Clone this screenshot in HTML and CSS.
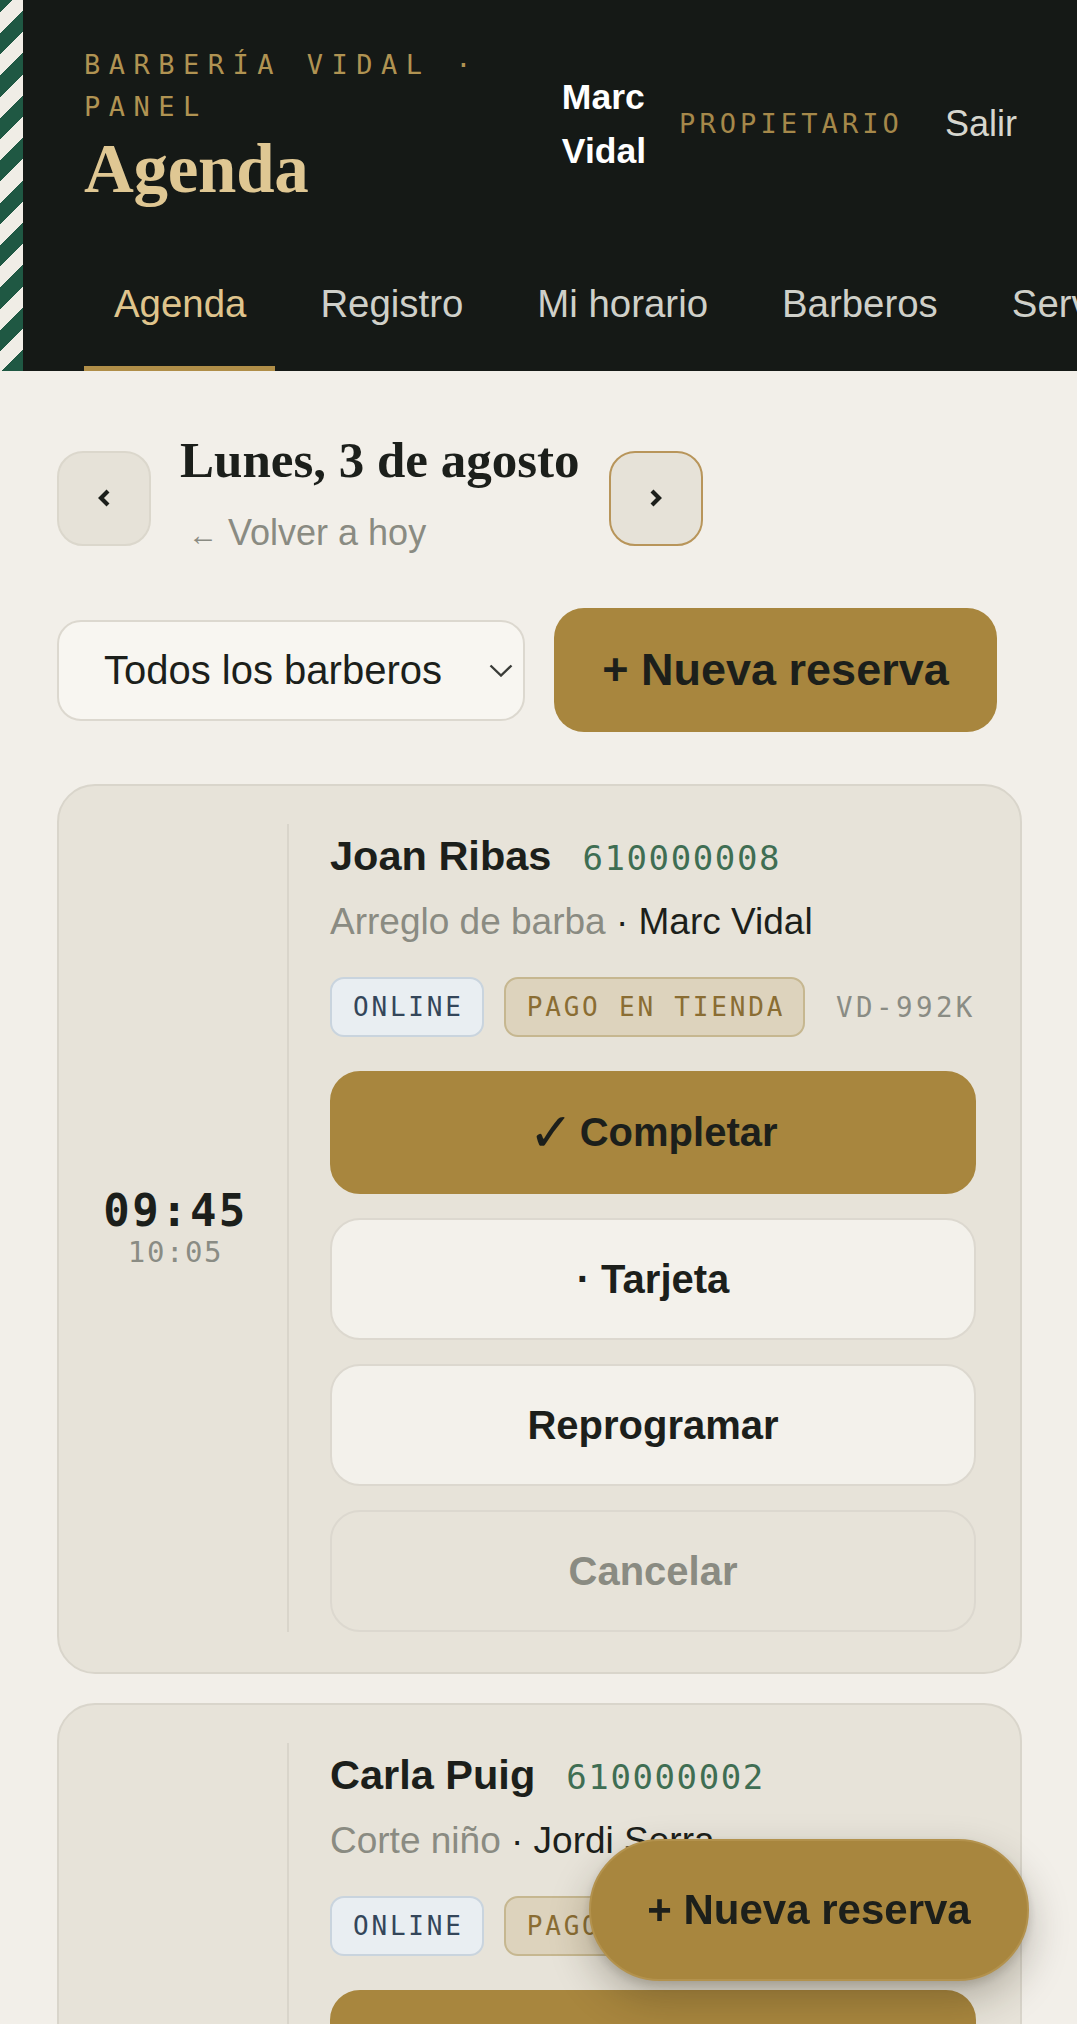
FILE: index.html
```html
<!DOCTYPE html>
<html lang="es">
<head>
<meta charset="utf-8">
<title>Agenda · Barbería Vidal</title>
<link rel="stylesheet" href="styles.css">
</head>
<body>
<header class="topbar">
  <div class="stripe"></div>
  <div class="topbar-inner">
    <div class="topbar-row">
      <div class="brand">
        <div class="eyebrow">BARBERÍA VIDAL · PANEL</div>
        <h1 class="page-title">Agenda</h1>
      </div>
      <div class="user">
        <span class="user-name">Marc Vidal</span>
        <span class="user-role">PROPIETARIO</span>
        <a class="logout">Salir</a>
      </div>
    </div>
    <nav class="tabs">
      <a class="tab active">Agenda</a>
      <a class="tab">Registro</a>
      <a class="tab">Mi horario</a>
      <a class="tab">Barberos</a>
      <a class="tab">Servicios</a>
      <a class="tab">Ajustes</a>
    </nav>
  </div>
</header>

<main class="main">
  <section class="date-row">
    <button class="nav-btn">
      <svg width="16" height="20" viewBox="0 0 16 20"><polyline points="12,3 5,10 12,17" fill="none" stroke="#1c1f1b" stroke-width="4.2" stroke-linejoin="miter"/></svg>
    </button>
    <div class="date-block">
      <h2 class="date-title">Lunes, 3 de agosto</h2>
      <a class="back-today"><span class="arrow">←</span> Volver a hoy</a>
    </div>
    <button class="nav-btn nav-btn-next">
      <svg width="16" height="20" viewBox="0 0 16 20"><polyline points="4,3 11,10 4,17" fill="none" stroke="#1c1f1b" stroke-width="4.2" stroke-linejoin="miter"/></svg>
    </button>
  </section>

  <section class="filter-row">
    <div class="select">
      <span>Todos los barberos</span>
      <svg class="select-caret" width="24" height="13" viewBox="0 0 24 13"><polyline points="1.5,1.5 12,11.5 22.5,1.5" fill="none" stroke="#3a3c38" stroke-width="2.4"/></svg>
    </div>
    <button class="btn-gold btn-new">+ Nueva reserva</button>
  </section>

  <section class="list">
    <article class="card">
      <div class="time">
        <div class="time-start">09:45</div>
        <div class="time-end">10:05</div>
      </div>
      <div class="body">
        <div class="name-row">
          <span class="client">Joan Ribas</span>
          <span class="phone">610000008</span>
        </div>
        <div class="service"><span class="muted">Arreglo de barba</span> · Marc Vidal</div>
        <div class="badges">
          <span class="badge badge-online">ONLINE</span>
          <span class="badge badge-pay">PAGO EN TIENDA</span>
          <span class="code">VD-992K</span>
        </div>
        <div class="actions">
          <button class="act act-primary"><span class="check">✓</span>Completar</button>
          <button class="act">· Tarjeta</button>
          <button class="act">Reprogramar</button>
          <button class="act act-ghost">Cancelar</button>
        </div>
      </div>
    </article>

    <article class="card">
      <div class="time">
        <div class="time-start">10:15</div>
        <div class="time-end">10:40</div>
      </div>
      <div class="body">
        <div class="name-row">
          <span class="client">Carla Puig</span>
          <span class="phone">610000002</span>
        </div>
        <div class="service"><span class="muted">Corte niño</span> · Jordi Serra</div>
        <div class="badges">
          <span class="badge badge-online">ONLINE</span>
          <span class="badge badge-pay">PAGO EN TIENDA</span>
          <span class="code">VD-4M7P</span>
        </div>
        <div class="actions">
          <button class="act act-primary"><span class="check">✓</span>Completar</button>
          <button class="act">· Tarjeta</button>
          <button class="act">Reprogramar</button>
          <button class="act act-ghost">Cancelar</button>
        </div>
      </div>
    </article>
  </section>
</main>

<button class="fab">+ Nueva reserva</button>
</body>
</html>
```

FILE: styles.css
```css
* { box-sizing: border-box; }

html, body {
  margin: 0;
  padding: 0;
}

body {
  background: #f2efe9;
  font-family: "Liberation Sans", Arial, sans-serif;
  color: #1c1f1b;
  overflow-x: hidden;
}

button {
  font-family: inherit;
  cursor: pointer;
}

/* ---------- Header ---------- */
.topbar {
  display: flex;
  background: #151916;
}

.stripe {
  width: 23px;
  flex: none;
  background: repeating-linear-gradient(-45deg, #1f5843 0 15px, #f0ede6 15px 30px);
}

.topbar-inner {
  flex: 1;
  min-width: 0;
  padding: 44px 60px 0 61px;
  overflow: hidden;
}

.topbar-row {
  display: flex;
  align-items: center;
  gap: 24px;
}

.brand {
  flex: 1;
  min-width: 0;
}

.eyebrow {
  font-family: "DejaVu Sans Mono", monospace;
  font-size: 27px;
  line-height: 42px;
  letter-spacing: 8.5px;
  color: #b09352;
}

.page-title {
  margin: 7px 0 0;
  font-family: "Liberation Serif", "Times New Roman", serif;
  font-weight: 700;
  font-size: 69px;
  line-height: 68px;
  color: #dfc793;
  letter-spacing: -0.3px;
}

.user {
  flex: none;
  display: flex;
  align-items: center;
  gap: 33px;
}

.user-name {
  width: min-content;
  font-weight: 700;
  font-size: 35.5px;
  line-height: 54px;
  color: #ffffff;
}

.user-role {
  font-family: "DejaVu Sans Mono", monospace;
  font-size: 27px;
  letter-spacing: 4.1px;
  color: #a5884a;
}

.logout {
  font-size: 36px;
  color: #d6d6ce;
  margin-left: 9px;
}

.tabs {
  display: flex;
  gap: 15px;
  margin-top: 51px;
  white-space: nowrap;
}

.tab {
  flex: none;
  padding: 26px 29px 39px 30px;
  font-size: 38.4px;
  line-height: 47px;
  color: #cfd0c9;
  border-bottom: 5px solid transparent;
}

.tab.active {
  color: #dfc48c;
  border-bottom-color: #b08e48;
}

/* ---------- Main ---------- */
.main {
  padding: 59px 55px 0 57px;
}

.date-row {
  display: flex;
  align-items: center;
  gap: 29px;
}

.nav-btn {
  flex: none;
  width: 94px;
  height: 95px;
  margin-top: 10px;
  border-radius: 26px;
  background: #e6e2d8;
  border: 2px solid #dbd7cc;
  display: flex;
  align-items: center;
  justify-content: center;
  padding: 0;
}

.nav-btn-next {
  border-color: #b8955a;
}

.date-block {
  display: flex;
  flex-direction: column;
}

.date-title {
  margin: 0;
  font-family: "Liberation Serif", "Times New Roman", serif;
  font-weight: 700;
  font-size: 51px;
  line-height: 60px;
  color: #1c1f1b;
  letter-spacing: 0;
}

.back-today {
  margin-top: 21px;
  font-size: 36px;
  line-height: 43px;
  color: #8a8b82;
  padding-left: 8px;
}

.back-today .arrow {
  font-size: 30px;
}

.filter-row {
  display: flex;
  align-items: center;
  gap: 29px;
  margin-top: 52px;
}

.select {
  width: 468px;
  height: 101px;
  border-radius: 24px;
  background: #f8f6f1;
  border: 2px solid #dcd8cf;
  display: flex;
  align-items: center;
  justify-content: space-between;
  padding: 0 10px 0 45px;
  font-size: 40px;
  color: #1c1f1b;
}

.btn-gold {
  background: #a8863e;
  border: none;
  color: #1c1f1b;
  font-weight: 700;
}

.btn-new {
  width: 443px;
  height: 124px;
  border-radius: 30px;
  font-size: 45px;
}

/* ---------- Cards ---------- */
.list {
  margin-top: 52px;
  display: flex;
  flex-direction: column;
  gap: 29px;
}

.card {
  display: grid;
  grid-template-columns: 157px 1fr;
  column-gap: 33px;
  background: #e7e3d9;
  border: 2px solid #d9d5cb;
  border-radius: 38px;
  padding: 38px 44px 40px 38px;
}

.time {
  display: flex;
  flex-direction: column;
  align-items: center;
  justify-content: center;
  font-family: "DejaVu Sans Mono", monospace;
}

.time-start {
  font-weight: 700;
  font-size: 44px;
  line-height: 48px;
  letter-spacing: 2.4px;
  color: #1c1f1b;
}

.time-end {
  font-size: 29px;
  line-height: 34px;
  letter-spacing: 1.6px;
  color: #8a8c84;
}

.body {
  border-left: 2px solid #d9d5cb;
  padding: 8px 0 0 41px;
}

.name-row {
  display: flex;
  align-items: baseline;
  gap: 31px;
}

.client {
  font-weight: 700;
  font-size: 41.5px;
  line-height: 48px;
  color: #1c1f1b;
}

.phone {
  font-family: "DejaVu Sans Mono", monospace;
  font-size: 34px;
  letter-spacing: 1.6px;
  color: #3f6e53;
}

.service {
  margin-top: 20px;
  font-size: 37px;
  line-height: 43px;
  color: #1c1f1b;
}

.muted {
  color: #8a8b82;
}

.badges {
  margin-top: 34px;
  display: flex;
  align-items: center;
  gap: 20px;
  white-space: nowrap;
}

.badge {
  font-family: "DejaVu Sans Mono", monospace;
  font-size: 26px;
  line-height: 30px;
  letter-spacing: 2.8px;
  padding: 13px 18px 13px 21px;
  border-radius: 14px;
  border: 2px solid transparent;
}

.badge-online {
  background: #e9eef2;
  border-color: #c9d4de;
  color: #34465a;
}

.badge-pay {
  background: #ddd3bd;
  border-color: #c6b790;
  color: #8a6d33;
}

.code {
  margin-left: 11px;
  font-family: "DejaVu Sans Mono", monospace;
  font-size: 27.5px;
  letter-spacing: 3.4px;
  color: #8a8c84;
}

.actions {
  margin-top: 34px;
  display: flex;
  flex-direction: column;
  gap: 24px;
}

.act {
  height: 122px;
  width: 100%;
  border-radius: 30px;
  background: #f3f1eb;
  border: 2px solid #dcd8cf;
  font-weight: 700;
  font-size: 40px;
  color: #1c1f1b;
  display: flex;
  align-items: center;
  justify-content: center;
}

.act-primary {
  height: 123px;
  background: #a8863e;
  border-color: #a8863e;
}

.check {
  font-family: "DejaVu Sans", sans-serif;
  font-weight: 700;
  font-size: 54px;
  margin-right: 6px;
}

.act-ghost {
  background: transparent;
  color: #8a8b82;
}

/* ---------- Floating action ---------- */
.fab {
  position: fixed;
  right: 48px;
  bottom: 43px;
  width: 440px;
  height: 142px;
  border-radius: 71px;
  background: #a8863e;
  border: 2px solid #b3924d;
  color: #1c1f1b;
  font-weight: 700;
  font-size: 42px;
  box-shadow: 0 18px 40px rgba(40, 32, 16, 0.28), 0 4px 10px rgba(40, 32, 16, 0.15);
}
```
